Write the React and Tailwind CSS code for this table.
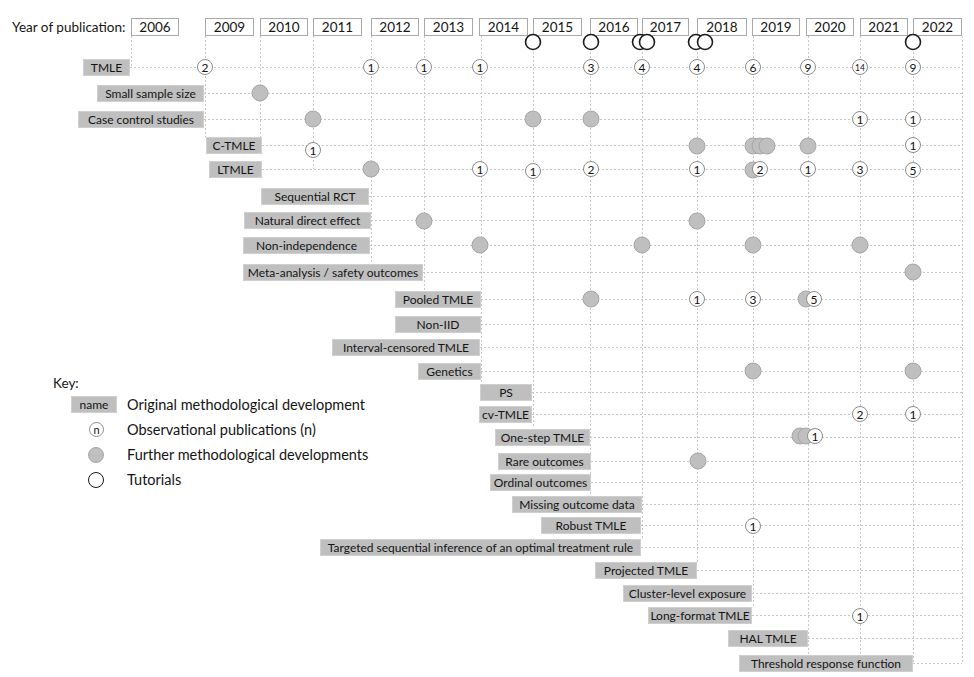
import React from "react";

const years = [
  ["2006", 131, 179],
  ["2009", 205, 254],
  ["2010", 260, 308],
  ["2011", 313, 362],
  ["2012", 371, 419],
  ["2013", 424, 473],
  ["2014", 479, 528],
  ["2015", 533, 582],
  ["2016", 590, 638],
  ["2017", 642, 689],
  ["2018", 697, 747],
  ["2019", 752, 800],
  ["2020", 806, 854],
  ["2021", 860, 908],
  ["2022", 913, 962],
];

// [x, bottom]
const vlines = [
  [131, 67],
  [205, 137],
  [260, 137],
  [313, 169],
  [371, 264],
  [424, 291],
  [481, 383],
  [533, 428],
  [590, 495],
  [642, 539],
  [697, 562],
  [753, 607],
  [808, 654],
  [860, 654],
  [913, 663],
  [962, 663],
];

// [text, left, right, y]
const labels = [
  ["TMLE", 83, 130, 67],
  ["Small sample size", 97, 204, 93],
  ["Case control studies", 78, 204, 119],
  ["C-TMLE", 206, 262, 145],
  ["LTMLE", 209, 262, 169],
  ["Sequential RCT", 261, 369, 196],
  ["Natural direct effect", 244, 371, 220],
  ["Non-independence", 243, 370, 245],
  ["Meta-analysis / safety outcomes", 243, 423, 272],
  ["Pooled TMLE", 395, 481, 299],
  ["Non-IID", 395, 481, 324],
  ["Interval-censored TMLE", 332, 480, 347],
  ["Genetics", 418, 481, 371],
  ["PS", 480, 532, 392],
  ["cv-TMLE", 479, 532, 414],
  ["One-step TMLE", 495, 590, 437],
  ["Rare outcomes", 498, 591, 461],
  ["Ordinal outcomes", 490, 591, 482],
  ["Missing outcome data", 512, 642, 504],
  ["Robust TMLE", 541, 641, 525],
  ["Targeted sequential inference of an optimal treatment rule", 320, 641, 547],
  ["Projected TMLE", 595, 697, 570],
  ["Cluster-level exposure", 623, 752, 593],
  ["Long-format TMLE", 648, 752, 615],
  ["HAL TMLE", 728, 808, 638],
  ["Threshold response function", 739, 913, 663],
];

// g = further development, t = tutorial, number = observational publications
const marks = [
  ["t", 533, 42], ["t", 591, 42], ["t", 640, 42], ["t", 647, 42], ["t", 696, 42], ["t", 705, 42], ["t", 913, 42],
  [2, 205, 67], [1, 371, 67], [1, 424, 67], [1, 480, 67], [3, 591, 67], [4, 642, 67], [4, 697, 67],
  [6, 753, 67], [9, 808, 67], [14, 860, 67], [9, 913, 67],
  ["g", 260, 93],
  ["g", 313, 119], ["g", 533, 119], ["g", 591, 119], [1, 860, 119], [1, 913, 119],
  [1, 313, 150], ["g", 697, 146], ["g", 753, 146], ["g", 760, 146], ["g", 767, 146], ["g", 808, 146], [1, 913, 145],
  ["g", 371, 169], [1, 480, 169], [1, 533, 171], [2, 591, 169], [1, 697, 169], ["g", 753, 170], [2, 760, 169],
  [1, 808, 169], [3, 860, 169], [5, 913, 170],
  ["g", 424, 221], ["g", 697, 221],
  ["g", 480, 245], ["g", 642, 245], ["g", 753, 245], ["g", 860, 245],
  ["g", 913, 272],
  ["g", 591, 299], [1, 697, 299], [3, 753, 299], ["g", 806, 299], [5, 814, 299],
  ["g", 753, 371], ["g", 913, 371],
  [2, 860, 414], [1, 913, 414],
  ["g", 800, 436], ["g", 806, 436], [1, 815, 436],
  ["g", 698, 461],
  [1, 753, 526],
  [1, 860, 616],
];

function Mark({ m }) {
  const [kind, x, y] = m;
  if (kind === "g") {
    return <circle cx={x} cy={y} r="8" fill="#bfbfbf" stroke="#a6a6a6" strokeWidth="1" />;
  }
  if (kind === "t") {
    return <circle cx={x} cy={y} r="7.5" fill="#ffffff" stroke="#1a1a1a" strokeWidth="1.6" />;
  }
  return (
    <g>
      <circle cx={x} cy={y} r="7.5" fill="#ffffff" stroke="#8c8c8c" strokeWidth="1" />
      <text
        x={x}
        y={y + 0.5}
        textAnchor="middle"
        dominantBaseline="central"
        fontSize={kind > 9 ? 8.5 : 12}
        fill="#111111"
      >
        {kind}
      </text>
    </g>
  );
}

function App() {
  return (
    <div className="relative w-[974px] h-[677px] overflow-hidden bg-white text-[#141414] font-['Lato',sans-serif]">
      <svg className="absolute inset-0" width="974" height="677">
        <g stroke="#c6c6c6" strokeWidth="1" strokeDasharray="2 2" fill="none">
          {vlines.map(([x, b]) => (
            <line key={x} x1={x + 0.5} y1={36} x2={x + 0.5} y2={b} />
          ))}
          {labels.map(([t, l, r, y]) => (
            <line key={t} x1={r} y1={y + 0.5} x2={962} y2={y + 0.5} />
          ))}
        </g>
      </svg>

      <div className="absolute left-[12px] top-[17px] h-[20px] flex items-center text-[13.5px]">
        Year of publication:
      </div>
      {years.map(([y, l, r]) => (
        <div
          key={y}
          className="absolute top-[18px] h-[18px] flex items-center justify-center border-[1.5px] border-[#a9a9a9] bg-white text-[13.5px]"
          style={{ left: l, width: r - l }}
        >
          {y}
        </div>
      ))}

      {labels.map(([t, l, r, y]) => (
        <div
          key={t}
          className="absolute h-[17px] flex items-center justify-center whitespace-nowrap bg-[#bfbfbf] border border-[#cfcfcf] text-[12px]"
          style={{ left: l, width: r - l, top: y - 8 }}
        >
          {t}
        </div>
      ))}

      <svg className="absolute inset-0" width="974" height="677">
        {marks.map((m, i) => (
          <Mark key={i} m={m} />
        ))}
      </svg>

      <div className="absolute left-[53px] top-[374px] flex flex-col">
        <div className="h-[18px] flex items-center text-[13.5px]">Key:</div>
        <div className="h-[25px] flex items-center">
          <div className="w-[74px] flex">
            <div className="ml-[18px] w-[46px] h-[17px] flex items-center justify-center bg-[#bfbfbf] border border-[#cfcfcf] text-[12px]">
              name
            </div>
          </div>
          <span className="text-[14.5px]">Original methodological development</span>
        </div>
        <div className="h-[25px] flex items-center">
          <div className="w-[74px] flex">
            <div className="ml-[36px] w-[15px] h-[15px] rounded-full border border-[#8c8c8c] flex items-center justify-center text-[11px] leading-none">
              n
            </div>
          </div>
          <span className="text-[14.5px]">Observational publications (n)</span>
        </div>
        <div className="h-[25px] flex items-center">
          <div className="w-[74px] flex">
            <div className="ml-[35px] w-[16px] h-[16px] rounded-full bg-[#bfbfbf] border border-[#a6a6a6]" />
          </div>
          <span className="text-[14.5px]">Further methodological developments</span>
        </div>
        <div className="h-[26px] flex items-center">
          <div className="w-[74px] flex">
            <div className="ml-[35px] w-[16px] h-[16px] rounded-full border-[1.6px] border-[#1a1a1a]" />
          </div>
          <span className="text-[14.5px]">Tutorials</span>
        </div>
      </div>
    </div>
  );
}

export default App;
